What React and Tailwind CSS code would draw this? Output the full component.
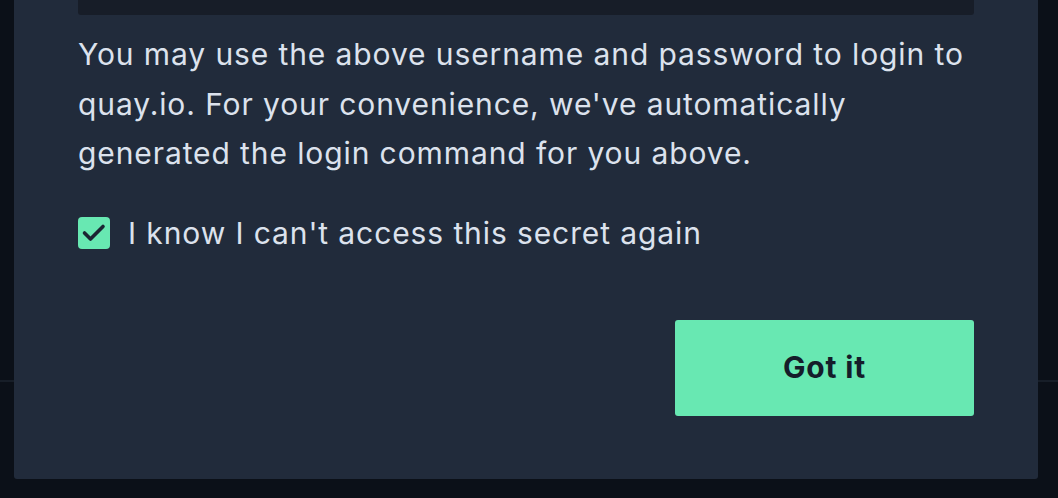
export default function App() {
  return (
    <div className="relative h-[498px] w-full overflow-hidden bg-[#0b1018] font-['Inter',sans-serif]">
      {/* page behind the modal */}
      <div className="h-[382px] border-b-2 border-[#171e28]" />

      {/* modal */}
      <div className="absolute left-[14px] top-0 w-[1024px] h-[479px] bg-[#212b3b] rounded-b-[3px] px-[64px]">
        <div className="h-[15px] bg-[#171d28] rounded-b-[3px]" />

        <p className="mt-[15px] text-[30px] tracking-[0.9px] leading-[49.5px] text-[#dce2ed]">
          You may use the above username and password to login to quay.io. For your convenience, we've automatically generated the login command for you above.
        </p>

        <label className="mt-[38px] flex items-center gap-[18px]">
          <span className="flex h-[32px] w-[32px] shrink-0 items-center justify-center rounded-[4px] bg-[#68e8b2]">
            <svg width="32" height="32" viewBox="0 0 32 32" fill="none">
              <path d="M6.5 16 L12.5 22 L25 9.5" stroke="#1b2533" strokeWidth="3.6" strokeLinecap="round" strokeLinejoin="round" />
            </svg>
          </span>
          <span className="text-[30px] tracking-[0.9px] leading-[32px] text-[#dce2ed]">I know I can't access this secret again</span>
        </label>

        <div className="mt-[71px] flex justify-end">
          <button className="h-[96px] w-[299px] rounded-[3px] bg-[#68e8b2] text-[30px] tracking-[0.8px] font-bold text-[#151d2a]">
            Got it
          </button>
        </div>
      </div>
    </div>
  )
}
